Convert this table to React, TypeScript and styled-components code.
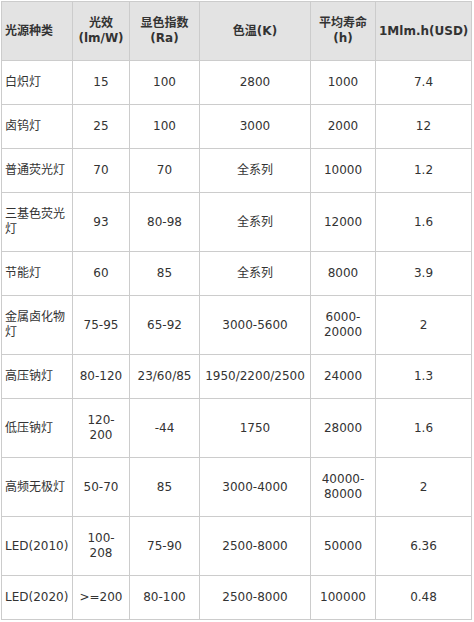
import styled, { createGlobalStyle } from "styled-components";

const GlobalStyle = createGlobalStyle`
  body {
    margin: 0;
    background: #fff;
    font-family: "DejaVu Sans", Verdana, "Noto Sans CJK SC", sans-serif;
  }
`;

const Wrapper = styled.div`
  padding: 1px 0 0 1px;
`;

const Table = styled.table`
  border-collapse: collapse;
  table-layout: fixed;
  width: 471px;
  font-size: 12px;
  line-height: 15px;
  color: #333;
`;

const HeadCell = styled.th<{ $left?: boolean }>`
  background: #e3e3e3;
  border: 1px solid #ccc;
  padding: 14px 3px;
  font-weight: bold;
  text-align: ${(p) => (p.$left ? "left" : "center")};
  vertical-align: middle;
`;

const Cell = styled.td<{ $left?: boolean }>`
  border: 1px solid #ccc;
  padding: 14px 3px;
  text-align: ${(p) => (p.$left ? "left" : "center")};
  vertical-align: middle;
`;

const widths = [71, 57, 70, 111, 65, 96];

const headers = [
  "光源种类",
  "光效(lm/W)",
  "显色指数(Ra)",
  "色温(K)",
  "平均寿命(h)",
  "1Mlm.h(USD)",
];

const rows = [
  ["白炽灯", "15", "100", "2800", "1000", "7.4"],
  ["卤钨灯", "25", "100", "3000", "2000", "12"],
  ["普通荧光灯", "70", "70", "全系列", "10000", "1.2"],
  ["三基色荧光灯", "93", "80-98", "全系列", "12000", "1.6"],
  ["节能灯", "60", "85", "全系列", "8000", "3.9"],
  ["金属卤化物灯", "75-95", "65-92", "3000-5600", "6000-20000", "2"],
  ["高压钠灯", "80-120", "23/60/85", "1950/2200/2500", "24000", "1.3"],
  ["低压钠灯", "120-200", "-44", "1750", "28000", "1.6"],
  ["高频无极灯", "50-70", "85", "3000-4000", "40000-80000", "2"],
  ["LED(2010)", "100-208", "75-90", "2500-8000", "50000", "6.36"],
  ["LED(2020)", ">=200", "80-100", "2500-8000", "100000", "0.48"],
];

const App = () => {
  return (
    <Wrapper>
      <GlobalStyle />
      <Table>
        <colgroup>
          {widths.map((w, i) => (
            <col key={i} style={{ width: w }} />
          ))}
        </colgroup>
        <thead>
          <tr>
            {headers.map((h, i) => (
              <HeadCell key={i} $left={i === 0}>
                {h}
              </HeadCell>
            ))}
          </tr>
        </thead>
        <tbody>
          {rows.map((r, ri) => (
            <tr key={ri}>
              {r.map((c, ci) => (
                <Cell key={ci} $left={ci === 0}>
                  {c}
                </Cell>
              ))}
            </tr>
          ))}
        </tbody>
      </Table>
    </Wrapper>
  );
};

export default App;
